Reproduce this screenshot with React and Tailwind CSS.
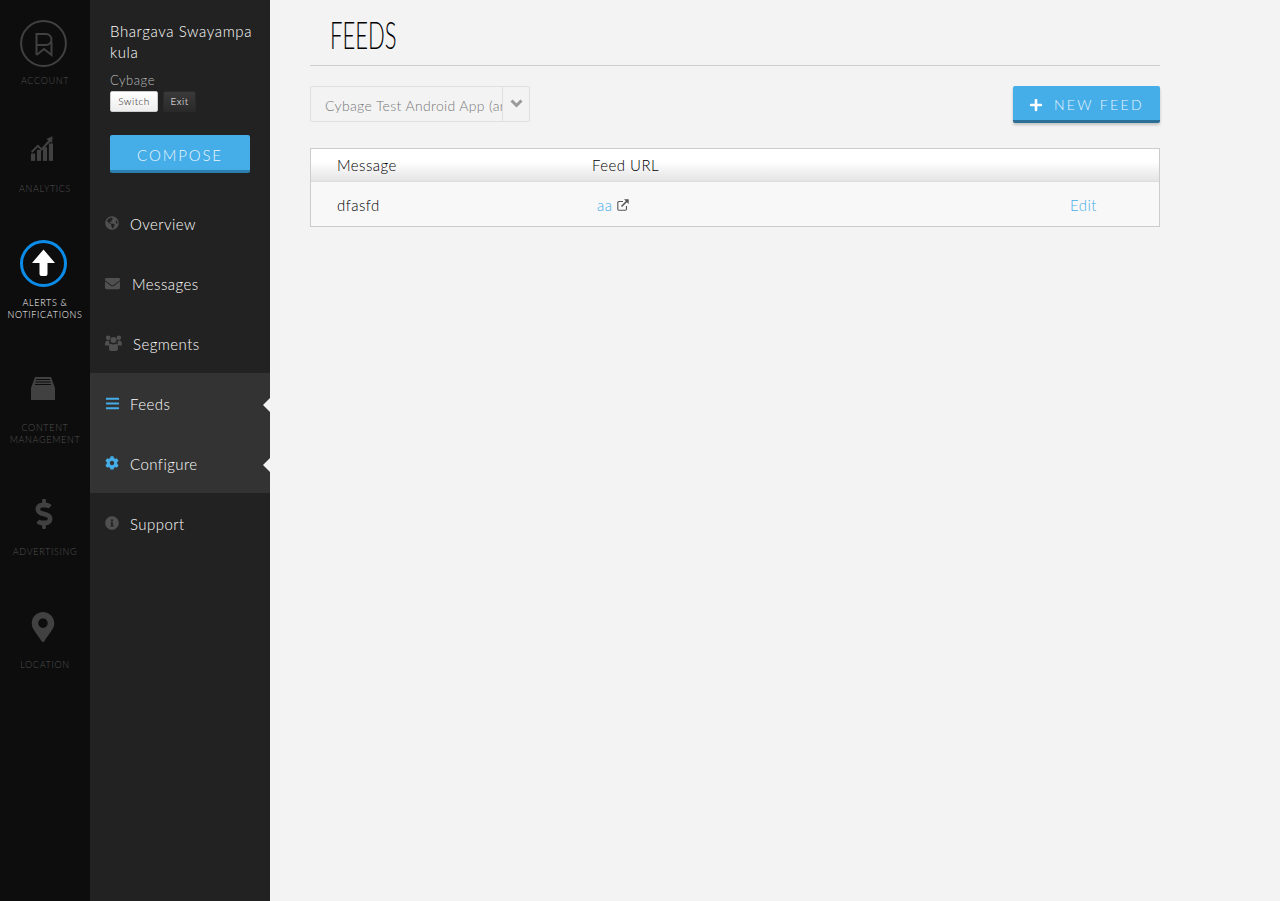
import React from "react";
import { FaGlobeAmericas, FaEnvelope, FaBars, FaCog, FaInfoCircle, FaPlus, FaMapMarkerAlt, FaDollarSign } from "react-icons/fa";

function RailItem({ icon, label, className = "", active = false }) {
  return (
    <div className={`flex flex-col items-center ${className}`}>
      {icon}
      <div className={`text-[9px] leading-[12px] tracking-[0.075em] text-center uppercase whitespace-nowrap ${active ? "text-white" : "text-[#505050]"}`}>
        {label}
      </div>
    </div>
  );
}

function NavItem({ icon, label, gap, active }) {
  return (
    <div className={`relative h-[60px] flex items-center pl-[15px] ${active ? "bg-[#333333]" : ""}`}>
      <span className={`w-[15px] flex justify-start ${active ? "text-[#45ade8]" : "text-[#505050]"}`}>{icon}</span>
      <span className={`${gap} pt-[2px] text-[15px] tracking-[0.03em] text-white`}>{label}</span>
      {active && (
        <span className="absolute right-0 top-[24px] mt-[1px] border-y-[7px] border-r-[7px] border-y-transparent border-r-[#f3f3f3]" />
      )}
    </div>
  );
}

export default function App() {
  return (
    <div className="flex min-h-[901px] bg-[#f3f3f3] font-['Lato',sans-serif] font-light">
      <aside className="w-[90px] shrink-0 bg-[#0d0d0d] flex flex-col items-center pt-[20px]">
        <RailItem
          label="Account"
          icon={
            <svg width="47" height="47" viewBox="0 0 47 47" fill="none" stroke="#414141" strokeWidth="2" className="mb-[8px] mr-[3px]">
              <circle cx="23.5" cy="23.5" r="22.4" />
              <path d="M16.500 35V14H26a5.500 5.500 0 0 1 0 11H16.500" />
              <path d="M16.500 35l7.500-6 7.500 6V22" />
            </svg>
          }
        />
        <RailItem
          className="mt-[48px]"
          label="Analytics"
          icon={
            <svg width="22" height="27" viewBox="0 0 24 27" fill="#414141" className="mb-[21px] mr-[6px]">
              <rect x="0" y="19" width="4.5" height="8" />
              <rect x="6.5" y="15" width="4.5" height="12" />
              <rect x="13" y="12" width="4.500" height="15" />
              <rect x="19.5" y="8" width="4.500" height="19" />
              <path d="M0 16.500 7.500 9l4 4L19 4.500 16.500 3 23.500 0 23 7.500 21 6l-9.500 10-4-4-6 6z" />
            </svg>
          }
        />
        <RailItem
          className="mt-[45px]"
          active
          label={<>Alerts &amp;<br />Notifications</>}
          icon={
            <svg width="47" height="47" viewBox="0 0 47 47" className="mb-[10px] mr-[3px]">
              <circle cx="23.5" cy="23.5" r="22" fill="none" stroke="#0c8ce9" strokeWidth="3" />
              <path d="M23.500 9.500 35 23h-7.500v11a2 2 0 0 1-2 2h-4a2 2 0 0 1-2-2V23H12z" fill="#fff" />
            </svg>
          }
        />
        <RailItem
          className="mt-[56px]"
          label={<>Content<br />Management</>}
          icon={
            <svg width="24" height="24" viewBox="0 0 24 24" fill="#414141" className="mb-[21px] mr-[3px]">
              <path d="M4 0h16l4 11v12H0V11z" />
              <path d="M5 2.500h14M4.500 5h15M4 7.500h16" stroke="#0d0d0d" strokeWidth="1" />
            </svg>
          }
        />
        <RailItem
          className="mt-[53px]"
          label="Advertising"
          icon={<FaDollarSign size={30} color="#414141" className="mb-[17px] mr-[3px]" />}
        />
        <RailItem
          className="mt-[54px]"
          label="Location"
          icon={<FaMapMarkerAlt size={30} color="#414141" className="mb-[17px] mr-[4px]" />}
        />
      </aside>

      <aside className="w-[180px] shrink-0 bg-[#222222]">
        <div className="px-[20px] pt-[21px]">
          <div className="text-[15px] leading-[21px] tracking-[0.04em] text-white whitespace-nowrap">Bhargava Swayampa<br />kula</div>
          <div className="mt-[9px] text-[13px] leading-[16px] tracking-[0.04em] text-[#bbbbbb]">Cybage</div>
          <div className="flex gap-[5px] mt-[3px]">
            <button className="h-[21px] w-[48px] rounded-[2px] border border-[#ccc] bg-gradient-to-b from-white to-[#eeeeee] text-[10px] tracking-[0.05em] text-[#222]">Switch</button>
            <button className="h-[21px] w-[33px] rounded-[2px] border border-[#2a2a2a] bg-gradient-to-b from-[#3a3a3a] to-[#2a2a2a] text-[10px] tracking-[0.05em] text-white">Exit</button>
          </div>
          <button className="mt-[23px] h-[38px] w-[140px] pt-[5px] rounded-[2px] bg-[#45ade8] border-b-[3px] border-[#2b7fae] text-[15px] tracking-[0.125em] text-[#e9f6fd]">COMPOSE</button>
        </div>
        <nav className="mt-[20px]">
          <NavItem icon={<FaGlobeAmericas size={14} />} label="Overview" gap="ml-[10px]" />
          <NavItem icon={<FaEnvelope size={17} />} label="Messages" gap="ml-[12px]" />
          <NavItem
            icon={
              <svg width="17" height="16" viewBox="0 0 17 16" fill="currentColor" className="shrink-0">
                <circle cx="3.200" cy="2.800" r="2.300" />
                <circle cx="13.800" cy="2.800" r="2.300" />
                <circle cx="8.500" cy="5" r="3" />
                <path d="M0 10c0-3 1-4.500 2.500-4.500.6 0 1.200.6 1.900.9-.4 1.600-.2 3 .5 4.100H1.500C.6 10.500 0 10.500 0 10zM17 10c0-3-1-4.500-2.500-4.500-.6 0-1.200.6-1.900.9.4 1.600.2 3-.5 4.100h3.400c.9 0 1.500 0 1.500-.500zM5.500 8.500c.8.700 1.800 1 3 1s2.200-.3 3-1c1 .3 1.500 2 1.500 5 0 1.500-.8 2.500-2 2.500H6c-1.200 0-2-1-2-2.500 0-3 .5-4.700 1.500-5z" />
              </svg>
            }
            label="Segments"
            gap="ml-[13px]"
          />
          <NavItem active icon={<FaBars size={15} />} label="Feeds" gap="ml-[10px]" />
          <NavItem active icon={<FaCog size={14} />} label="Configure" gap="ml-[10px]" />
          <NavItem icon={<FaInfoCircle size={14} />} label="Support" gap="ml-[10px]" />
        </nav>
      </aside>

      <main className="flex-1 pl-[40px]">
        <div className="w-[850px]">
          <header className="h-[66px] border-b border-[#cfcfcf] pl-[20px] pt-[3px] flex items-center">
            <h1 className="text-[38px] leading-[60px] font-light text-black origin-left scale-x-[0.58]">FEEDS</h1>
          </header>
          <div className="flex justify-between items-start mt-[20px]">
            <div className="flex w-[220px] h-[36px] rounded-[2px] border border-[#e0e0e0] bg-[#f3f3f3]">
              <div className="w-[191px] pl-[14px] overflow-hidden whitespace-nowrap text-[14px] leading-[38px] tracking-[0.025em] text-[#777777]">Cybage Test Android App (android)</div>
              <div className="flex-1 border-l border-[#e0e0e0] flex justify-center pt-[12px]">
                <svg width="13" height="9" viewBox="0 0 13 9" fill="none" stroke="#999999" strokeWidth="3">
                  <path d="M1.500 1.500 6.500 6.500 11.500 1.500" />
                </svg>
              </div>
            </div>
            <button className="h-[37px] w-[147px] pt-[3px] rounded-[2px] bg-[#45ade8] border-b-[3px] border-[#2b6f96] shadow-[0_2px_3px_rgba(0,0,0,0.2)] flex items-center justify-center gap-[11px] text-[14px] tracking-[0.17em] text-[#e9f6fd]">
              <FaPlus size={14} color="#fff" />
              NEW FEED
            </button>
          </div>
          <div className="mt-[25px] border border-[#cccccc] bg-[#f8f8f8]">
            <div className="h-[33px] flex items-center border-b border-[#dddddd] bg-gradient-to-b from-white from-40% to-[#e4e4e4] text-[15px] tracking-[0.03em] text-black">
              <div className="w-[281px] pl-[26px]">Message</div>
              <div>Feed URL</div>
            </div>
            <div className="h-[44px] pt-[2px] flex items-center text-[15px] tracking-[0.03em]">
              <div className="w-[286px] pl-[26px] text-black">dfasfd</div>
              <div className="w-[473px] flex items-center gap-[5px] text-[#45ade8]">
                aa
                <svg width="12" height="12" viewBox="0 0 12 12" fill="none" stroke="#555555" strokeWidth="1.100">
                  <path d="M6 2.500H2a1.200 1.200 0 0 0-1.200 1.200V10A1.200 1.200 0 0 0 2 11.200h6.300A1.200 1.200 0 0 0 9.500 10V7" />
                  <path d="M4.500 7.500 10.500 1.500" strokeWidth="1.600" />
                  <path d="M7 .3h4.700V5z" fill="#555555" stroke="none" />
                </svg>
              </div>
              <div className="text-[#45ade8]">Edit</div>
            </div>
          </div>
        </div>
      </main>
    </div>
  );
}
